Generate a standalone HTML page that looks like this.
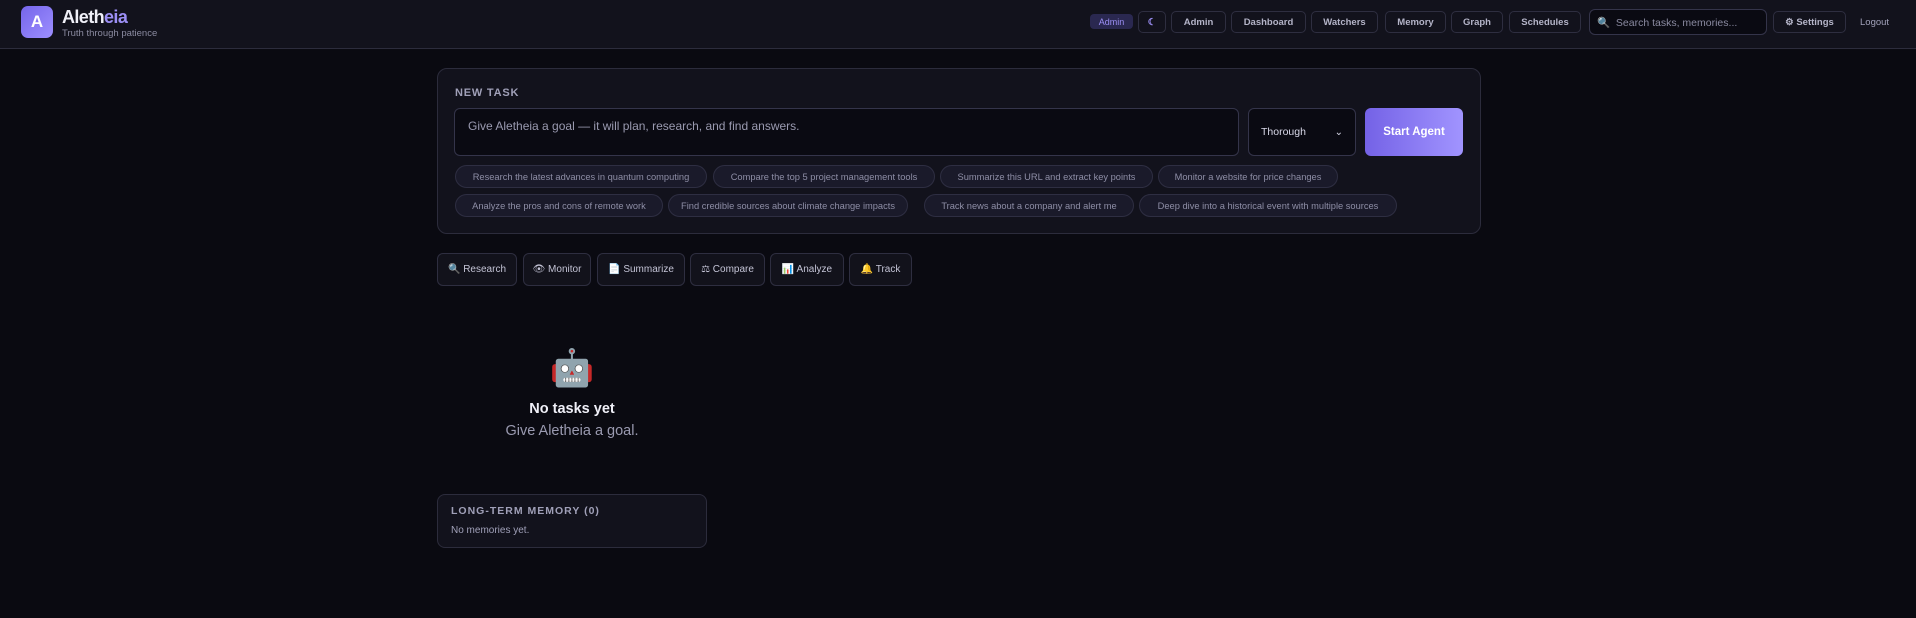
<!DOCTYPE html>
<html><head><meta charset="utf-8"><style>
*{box-sizing:border-box;margin:0;padding:0}
body{width:1916px;height:618px;background:#0a0a11;font-family:"Liberation Sans",sans-serif;color:#e6e6f0;position:relative;overflow:hidden}
.hdr{position:absolute;left:0;top:0;width:1916px;height:49px;background:#12121c;border-bottom:1px solid #2c2c3c}
.logo{position:absolute;left:21px;top:6px;width:32px;height:32px;border-radius:7px;background:linear-gradient(135deg,#7565ea,#9d8fff);color:#fff;font-weight:bold;font-size:17px;display:flex;align-items:center;justify-content:center}
.t1{position:absolute;left:62px;top:7px;font-size:18px;font-weight:bold;letter-spacing:-0.6px;color:#f0f0f8}
.t1 span{color:#9c8ff5}
.t2{position:absolute;left:62px;top:28px;font-size:9.5px;color:#8a8aa0}
.nb{position:absolute;top:11px;height:22px;border:1px solid #2e2e40;border-radius:5px;background:#12121c;color:#b4b4c8;font-size:9.5px;font-weight:bold;display:flex;align-items:center;justify-content:center}
.card{position:absolute;background:#12121c;border:1px solid #2c2c3c;border-radius:10px}
.chip{position:absolute;height:23px;border:1px solid #2e2e42;border-radius:12px;background:#1a1a2a;color:#8e8ea6;font-size:9.3px;display:flex;align-items:center;justify-content:center;white-space:nowrap}
.qb{position:absolute;top:253px;height:33px;border:1px solid #2e2e40;border-radius:6px;background:#12121b;color:#c4c4d6;font-size:10px;display:flex;align-items:center;justify-content:center;gap:4px;font-family:"Liberation Sans","DejaVu Sans",sans-serif}
</style></head><body>
<div class="hdr">
<div class="logo">A</div>
<div class="t1">Aleth<span>eia</span></div>
<div class="t2">Truth through patience</div>
<div style="position:absolute;left:1090px;top:14px;width:43px;height:15px;border-radius:4px;background:#2a2850;color:#9c8ff5;font-size:9px;display:flex;align-items:center;justify-content:center">Admin</div>
<div class="nb" style="left:1138px;width:28px;color:#9c8ff5">☾</div>
<div class="nb" style="left:1171px;width:55px">Admin</div>
<div class="nb" style="left:1231px;width:75px">Dashboard</div>
<div class="nb" style="left:1311px;width:67px">Watchers</div>
<div class="nb" style="left:1385px;width:61px">Memory</div>
<div class="nb" style="left:1451px;width:52px">Graph</div>
<div class="nb" style="left:1509px;width:72px">Schedules</div>
<div style="position:absolute;left:1589px;top:9px;width:178px;height:26px;border:1px solid #34344a;border-radius:6px;background:#0a0a12;color:#8a8aa0;font-size:10.5px;display:flex;align-items:center;padding-left:7px">🔍&nbsp;&nbsp;Search tasks, memories...</div>
<div class="nb" style="left:1773px;width:73px">⚙ Settings</div>
<div style="position:absolute;left:1860px;top:17px;font-size:9.5px;color:#a0a0b8">Logout</div>
</div>

<div class="card" style="left:437px;top:68px;width:1044px;height:166px"></div>
<div style="position:absolute;left:455px;top:87px;font-size:11px;font-weight:bold;letter-spacing:0.8px;color:#a0a0b8">NEW TASK</div>
<div style="position:absolute;left:454px;top:108px;width:785px;height:48px;border:1px solid #34344a;border-radius:6px;background:#0a0a12;color:#9a9ab0;font-size:12px;padding:10px 13px">Give Aletheia a goal — it will plan, research, and find answers.</div>
<div style="position:absolute;left:1248px;top:108px;width:108px;height:48px;border:1px solid #34344a;border-radius:6px;background:#0a0a12;color:#d8d8e8;font-size:10.5px;padding:0 12px;display:flex;align-items:center;justify-content:space-between"><span>Thorough</span><span style="font-size:10px">⌄</span></div>
<div style="position:absolute;left:1365px;top:108px;width:98px;height:48px;border-radius:6px;background:linear-gradient(90deg,#7462e6,#a194ff);color:#fff;font-size:11.5px;font-weight:bold;display:flex;align-items:center;justify-content:center">Start Agent</div>

<div class="chip" style="left:455px;top:165px;width:252px">Research the latest advances in quantum computing</div>
<div class="chip" style="left:713px;top:165px;width:222px">Compare the top 5 project management tools</div>
<div class="chip" style="left:940px;top:165px;width:213px">Summarize this URL and extract key points</div>
<div class="chip" style="left:1158px;top:165px;width:180px">Monitor a website for price changes</div>
<div class="chip" style="left:455px;top:194px;width:208px">Analyze the pros and cons of remote work</div>
<div class="chip" style="left:668px;top:194px;width:240px">Find credible sources about climate change impacts</div>
<div class="chip" style="left:924px;top:194px;width:210px">Track news about a company and alert me</div>
<div class="chip" style="left:1139px;top:194px;width:258px">Deep dive into a historical event with multiple sources</div>

<div class="qb" style="left:437px;width:80px">🔍 Research</div>
<div class="qb" style="left:523px;width:68px">👁 Monitor</div>
<div class="qb" style="left:597px;width:88px">📄 Summarize</div>
<div class="qb" style="left:690px;width:75px">⚖ Compare</div>
<div class="qb" style="left:770px;width:74px">📊 Analyze</div>
<div class="qb" style="left:849px;width:63px">🔔 Track</div>

<div style="position:absolute;left:472px;top:346px;width:200px;text-align:center;font-size:36px;line-height:44px">🤖</div>
<div style="position:absolute;left:472px;top:401px;width:200px;text-align:center;font-size:14.5px;font-weight:bold;color:#f0f0f8">No tasks yet</div>
<div style="position:absolute;left:472px;top:423px;width:200px;text-align:center;font-size:14.5px;color:#9a9ab0">Give Aletheia a goal.</div>

<div class="card" style="left:437px;top:494px;width:270px;height:54px;border-radius:8px"></div>
<div style="position:absolute;left:451px;top:505px;font-size:10.5px;font-weight:bold;letter-spacing:1px;color:#a0a0b8">LONG-TERM MEMORY (0)</div>
<div style="position:absolute;left:451px;top:525px;font-size:10px;color:#a0a0b8">No memories yet.</div>
</body></html>
